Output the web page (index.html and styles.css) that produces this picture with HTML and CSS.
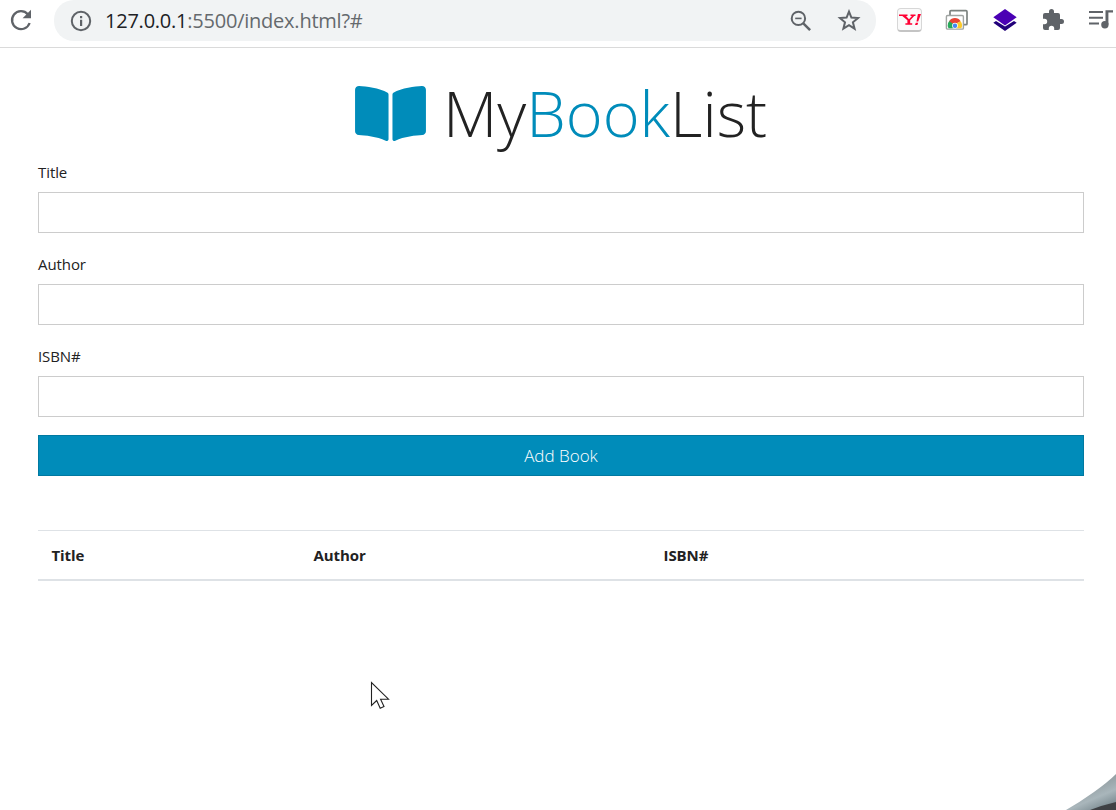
FILE: index.html
```html
<!DOCTYPE html>
<html lang="en">
<head>
<meta charset="utf-8">
<title>MyBookList</title>
<link rel="stylesheet" href="styles.css">
</head>
<body>
<header class="toolbar">
  <svg class="reload" width="24" height="24" viewBox="0 0 24 24"><path d="M18.800 6.200A9 9 0 1 0 20.600 15" fill="none" stroke="#5f6368" stroke-width="2.300"/><path d="M22 1.800v8.400h-8.400z" fill="#5f6368"/></svg>
  <div class="address">
    <svg class="info" width="22" height="22" viewBox="0 0 22 22"><circle cx="11" cy="11" r="9.200" fill="none" stroke="#5f6368" stroke-width="2"/><path d="M10 6h2.200v2.200H10zM10 9.800h2.200V16H10z" fill="#5f6368"/></svg>
    <div class="url"><span class="host">127.0.0.1</span>:5500/index.html?#</div>
    <svg class="magnifier" width="22" height="22" viewBox="0 0 22 22"><g fill="none" stroke="#5f6368"><circle cx="8.400" cy="8.400" r="6.700" stroke-width="2"/><path d="M5.200 8.400h6.400" stroke-width="1.600"/><path d="M13.300 13.300l6.800 6.800" stroke-width="2.500"/></g></svg>
    <svg class="star" width="24" height="24" viewBox="0 0 24 24"><path d="M12 2.600l2.400 6 6.600.5-5.100 4.200 1.700 6.400-5.600-3.500-5.600 3.500L8 13.300l-5-4.200 6.600-.5z" fill="none" stroke="#5f6368" stroke-width="2"/></svg>
  </div>
  <div class="extensions">
    <span class="yahoo"><svg width="22" height="14" viewBox="0 0 22 14"><path d="M0 1.500h8.500V3H7l3 3.300L13 3h-1.500V1.500h5V3h-1.300l-4 4.300v3h2v1.500H6.400v-1.500h2v-3L3.300 3H0zM18.900 1H22l-2.800 7.600h-1.700zM16.800 9.800h2.400l-.8 2.100h-2.400z" fill="#ff0033"/></svg></span>
    <svg width="24" height="24" viewBox="0 0 24 24"><path d="M5 8V3.700q0-1 1-1h15q1 0 1 1v12q0 1-1 1h-2" fill="#fff" stroke="#7d8380" stroke-width="1.700"/><rect x="1.400" y="7.500" width="17" height="13.600" rx="1.200" fill="#fff" stroke="#a0a4a2" stroke-width="1.400"/><path d="M3.500 20.200a6.500 6.500 0 0 1 3.100-9L9.500 17l-2 3.200z" fill="#28a95b"/><path d="M4.300 13.200a6.500 6.500 0 0 1 11.300 0l-4 2.300h-4z" fill="#ea4335"/><path d="M12 15l3.600-1.800a6.500 6.500 0 0 1 .7 7h-5z" fill="#fbca2d"/><circle cx="10" cy="17.600" r="2.900" fill="#fff"/><circle cx="10" cy="17.800" r="2.200" fill="#4285f4"/></svg>
    <svg width="26" height="24" viewBox="0 0 26 24"><path d="M1.300 14.700L4 13l9 5.500 9-5.500 2.700 1.700L13 23z" fill="#21007a"/><path d="M1.300 9.300L13 1l11.700 8.300L13 17.600z" fill="#4a00b4"/></svg>
    <svg width="24" height="24" viewBox="0 0 24 24"><path d="M20.500 11H19V7a2 2 0 0 0-2-2h-4V3.500a2.500 2.500 0 0 0-5 0V5H4a2 2 0 0 0-2 2v3.800h1.500a2.700 2.700 0 0 1 0 5.400H2V20a2 2 0 0 0 2 2h3.800v-1.500a2.700 2.700 0 0 1 5.400 0V22H17a2 2 0 0 0 2-2v-4h1.500a2.500 2.500 0 0 0 0-5z" fill="#5f6368"/></svg>
    <svg width="26" height="22" viewBox="0 0 26 22"><path d="M1 3h14M1 8.800h14M1 14.600h10" stroke="#5f6368" stroke-width="2"/><path d="M17.500 1.300H25v2.200h-4.600v12h-2.900z" fill="#5f6368"/><circle cx="16.900" cy="15.800" r="3.700" fill="#5f6368"/></svg>
  </div>
</header>
<main class="container">
  <h1 class="brand"><svg class="book" width="71" height="63" viewBox="0 0 576 512"><path fill="#008cba" d="M542.22 32.050c-54.800 3.110-163.720 14.430-230.960 55.590-4.640 2.840-7.270 7.890-7.270 13.170v363.870c0 11.550 12.630 18.850 23.280 13.490 69.180-34.820 169.230-44.320 218.700-46.920 16.890-.89 30.020-14.430 30.020-30.660V62.750c.010-17.710-15.350-31.740-33.770-30.700zM264.730 87.640C197.500 46.480 88.580 35.170 33.780 32.050 15.360 31.010 0 45.040 0 62.750V400.600c0 16.240 13.130 29.780 30.020 30.660 49.490 2.600 149.590 12.110 218.770 46.950 10.620 5.350 23.210-1.940 23.210-13.460V100.630c0-5.290-2.620-10.140-7.270-12.990z"/></svg><span class="name">My<span class="accent">Book</span>List</span></h1>
  <form class="book-form">
    <label class="field">Title<input class="control" type="text"></label>
    <label class="field">Author<input class="control" type="text"></label>
    <label class="field">ISBN#<input class="control" type="text"></label>
    <button class="submit" type="button">Add Book</button>
  </form>
  <div class="table-head"><span>Title</span><span>Author</span><span>ISBN#</span></div>
</main>
<svg class="cursor" width="20" height="29" viewBox="0 0 20 29"><path d="M1.500 1.500v23l5.200-5 3.500 7.700 3.800-1.700-3.400-7.300h7.900z" fill="#fff" stroke="#222" stroke-width="1.100"/></svg>
<svg class="corner" width="50" height="37" viewBox="0 0 50 37"><defs><linearGradient id="curl" x1="0" y1="0" x2=".6" y2="1"><stop offset=".35" stop-color="#8c979b"/><stop offset=".75" stop-color="#a9b6bb"/><stop offset="1" stop-color="#829197"/></linearGradient></defs><path d="M0 37Q14 29 28 19T50 1V37z" fill="url(#curl)"/><path d="M24 37q13-5 26-8v8z" fill="#3f4144"/></svg>
</body>
</html>
```
FILE: styles.css
```css
* { box-sizing: border-box; }
body {
  margin: 0;
  height: 810px;
  overflow: hidden;
  background: #fff;
  color: #222;
  font: 300 15px/20px "Open Sans", sans-serif;
}
svg { display: block; flex: none; }
.toolbar {
  display: flex;
  height: 48px;
  padding-left: 9px;
  border-bottom: 1px solid #dadada;
}
.reload { margin: 8px 21px 0 0; }
.address {
  display: flex;
  width: 822px;
  height: 41px;
  padding: 0 15px 0 16px;
  align-items: center;
  border-radius: 20px;
  background: #f1f3f4;
}
.url {
  flex: 1;
  margin-left: 13px;
  color: #65696d;
  font: 400 20px/40px "Open Sans", sans-serif;
  letter-spacing: -0.23px;
}
.host { color: #202124; }
.magnifier { margin-right: 25px; }
.extensions {
  display: flex;
  height: 40px;
  margin-left: 21px;
  align-items: center;
  gap: 23px;
}
.yahoo {
  display: flex;
  width: 25px;
  height: 24px;
  align-items: center;
  justify-content: center;
  border: 1px solid #d7d7d7;
  border-bottom: 2px solid #c4c4c4;
  border-radius: 4px;
  background: #fafafa;
}
.container { padding: 20px 32px 0 38px; }
.brand {
  display: flex;
  height: 94px;
  margin: 0;
  justify-content: center;
  font-size: 63px;
  font-weight: 300;
  line-height: 90px;
}
.book { margin: 14px 17px 0 0; }
.accent { color: #008cba; }
.field {
  display: block;
  height: 71px;
  margin-bottom: 21px;
  font-weight: 400;
  letter-spacing: -0.08px;
}
.field:last-of-type { margin-bottom: 18px; }
.control {
  display: block;
  width: 100%;
  height: 41px;
  margin-top: 10px;
  border: 1px solid #ccc;
  background: #fff;
}
.submit {
  display: block;
  width: 100%;
  height: 41px;
  border: 1px solid #0079a1;
  background: #008cba;
  color: #fff;
  font: 300 17px/24px "Open Sans", sans-serif;
}
.table-head {
  display: grid;
  grid-template-columns: 262px 350px 1fr;
  height: 51px;
  margin-top: 54px;
  padding-left: 13.5px;
  border-top: 1px solid #dee2e6;
  border-bottom: 2px solid #dee2e6;
  font-weight: 700;
  letter-spacing: -0.08px;
  line-height: 48px;
}
.cursor { position: absolute; left: 370px; top: 681px; }
.corner { position: absolute; right: 0; bottom: 0; }
```
